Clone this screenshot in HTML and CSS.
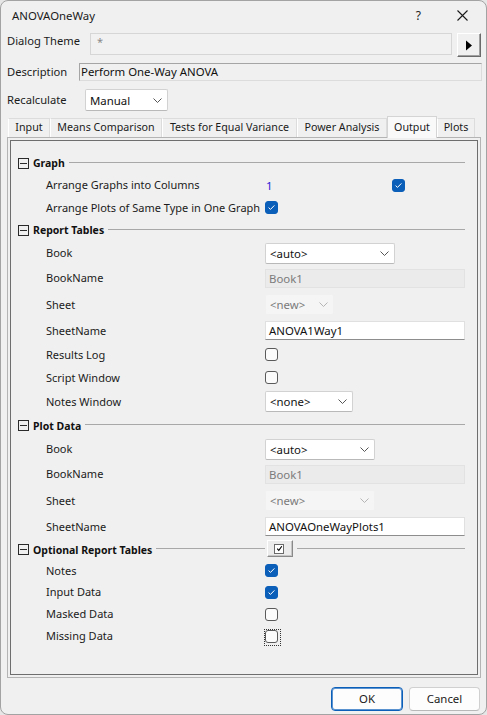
FILE: index.html
```html
<!DOCTYPE html>
<html>
<head>
<meta charset="utf-8">
<link rel="stylesheet" href="styles.css">
</head>
<body>
<div class="window">
  <div class="titlebar">
    <span class="title">ANOVAOneWay</span>
    <span class="help">?</span>
    <span class="close"><svg width="11" height="11" viewBox="0 0 11 11"><path d="M0.5 0.5L10.5 10.5M10.5 0.5L0.5 10.5" stroke="#1a1a1a" stroke-width="1.1" fill="none"/></svg></span>
  </div>

  <div class="top-row theme-row">
    <span class="top-label theme-label">Dialog Theme</span>
    <div class="theme-box">*</div>
    <div class="theme-btn"><svg width="8" height="11" viewBox="0 0 8 11"><path d="M1 0.5L7 5.5L1 10.5Z" fill="#000"/></svg></div>
  </div>

  <div class="top-row desc-row">
    <span class="top-label desc-label">Description</span>
    <div class="desc-box">Perform One-Way ANOVA</div>
  </div>

  <div class="top-row recalc-row">
    <span class="top-label recalc-label">Recalculate</span>
    <div class="select recalc-select"><span>Manual</span><svg class="chev" width="9" height="5" viewBox="0 0 9 5"><path d="M0.5 0.5L4.5 4.5L8.5 0.5" stroke="#555" fill="none"/></svg></div>
  </div>

  <div class="tabs">
    <div class="tab t-input">Input</div>
    <div class="tab t-means">Means Comparison</div>
    <div class="tab t-tests">Tests for Equal Variance</div>
    <div class="tab t-power">Power Analysis</div>
    <div class="tab t-output active">Output</div>
    <div class="tab t-plots">Plots</div>
  </div>

  <div class="panel">
    <div class="panel-inner">
      <div class="props">
        <div class="sec"><span class="minus"></span><span class="sec-title">Graph</span><span class="sec-line"></span></div>
        <div class="prop"><span class="lbl">Arrange Graphs into Columns</span><span class="num">1</span><span class="cb on cb-far"><svg width="11" height="11" viewBox="0 0 11 11"><path d="M2.6 5.6L4.5 7.4L8.4 3.4" stroke="#fff" stroke-width="1" fill="none"/></svg></span></div>
        <div class="prop"><span class="lbl auto">Arrange Plots of Same Type in One Graph</span><span class="cb on cb-near"><svg width="11" height="11" viewBox="0 0 11 11"><path d="M2.6 5.6L4.5 7.4L8.4 3.4" stroke="#fff" stroke-width="1" fill="none"/></svg></span></div>

        <div class="sec"><span class="minus"></span><span class="sec-title">Report Tables</span><span class="sec-line"></span></div>
        <div class="prop"><span class="lbl">Book</span><div class="select w130"><span>&lt;auto&gt;</span><svg class="chev" width="9" height="5" viewBox="0 0 9 5"><path d="M0.5 0.5L4.5 4.5L8.5 0.5" stroke="#555" fill="none"/></svg></div></div>
        <div class="prop"><span class="lbl">BookName</span><div class="input disabled">Book1</div></div>
        <div class="prop"><span class="lbl">Sheet</span><div class="select disabled w69"><span>&lt;new&gt;</span><svg class="chev" width="9" height="5" viewBox="0 0 9 5"><path d="M0.5 0.5L4.5 4.5L8.5 0.5" stroke="#b5b5b5" fill="none"/></svg></div></div>
        <div class="prop"><span class="lbl">SheetName</span><div class="input">ANOVA1Way1</div></div>
        <div class="prop"><span class="lbl">Results Log</span><span class="cb"></span></div>
        <div class="prop"><span class="lbl">Script Window</span><span class="cb"></span></div>
        <div class="prop"><span class="lbl">Notes Window</span><div class="select w88"><span>&lt;none&gt;</span><svg class="chev" width="9" height="5" viewBox="0 0 9 5"><path d="M0.5 0.5L4.5 4.5L8.5 0.5" stroke="#555" fill="none"/></svg></div></div>

        <div class="sec"><span class="minus"></span><span class="sec-title">Plot Data</span><span class="sec-line"></span></div>
        <div class="prop"><span class="lbl">Book</span><div class="select w110"><span>&lt;auto&gt;</span><svg class="chev" width="9" height="5" viewBox="0 0 9 5"><path d="M0.5 0.5L4.5 4.5L8.5 0.5" stroke="#555" fill="none"/></svg></div></div>
        <div class="prop"><span class="lbl">BookName</span><div class="input disabled">Book1</div></div>
        <div class="prop"><span class="lbl">Sheet</span><div class="select disabled w110"><span>&lt;new&gt;</span><svg class="chev" width="9" height="5" viewBox="0 0 9 5"><path d="M0.5 0.5L4.5 4.5L8.5 0.5" stroke="#b5b5b5" fill="none"/></svg></div></div>
        <div class="prop"><span class="lbl">SheetName</span><div class="input">ANOVAOneWayPlots1</div></div>

        <div class="sec sec-opt">
          <span class="sec-head"><span class="minus"></span><span class="sec-title">Optional Report Tables</span><span class="sec-line"></span></span>
          <span class="mini-btn"><span class="mini-cb"><svg width="7" height="7" viewBox="0 0 7 7"><path d="M1.2 3.6L2.8 5.3L5.8 1.2" stroke="#000" stroke-width="1.1" fill="none"/></svg></span></span>
          <span class="sec-line"></span>
        </div>
        <div class="prop"><span class="lbl">Notes</span><span class="cb on"><svg width="11" height="11" viewBox="0 0 11 11"><path d="M2.6 5.6L4.5 7.4L8.4 3.4" stroke="#fff" stroke-width="1" fill="none"/></svg></span></div>
        <div class="prop"><span class="lbl">Input Data</span><span class="cb on"><svg width="11" height="11" viewBox="0 0 11 11"><path d="M2.6 5.6L4.5 7.4L8.4 3.4" stroke="#fff" stroke-width="1" fill="none"/></svg></span></div>
        <div class="prop"><span class="lbl">Masked Data</span><span class="cb"></span></div>
        <div class="prop"><span class="lbl">Missing Data</span><span class="focus"><span class="cb"></span></span></div>
      </div>
    </div>
  </div>

  <div class="buttons">
    <div class="btn default">OK</div>
    <div class="btn">Cancel</div>
  </div>
</div>
</body>
</html>
```
FILE: styles.css
```css
html, body {
  margin: 0;
  padding: 0;
  background: #e6e6e6;
}
body {
  font-family: "Noto Sans", "Segoe UI", sans-serif;
  font-size: 11px;
  color: #1b1b1b;
}
.window {
  width: 487px;
  height: 715px;
  box-sizing: border-box;
  border: 1px solid #a3a3a3;
  border-radius: 8px;
  background: #f0f0f0;
  overflow: hidden;
}
.titlebar {
  height: 28px;
  display: flex;
  align-items: center;
  padding-left: 11px;
  padding-right: 18px;
}
.title {
  font-size: 11.4px;
  color: #1a1a1a;
}
.help {
  margin-left: auto;
  font-size: 12px;
  color: #222;
  margin-right: 36px;
}
.close {
  display: flex;
  width: 11px;
  height: 11px;
}
.top-row {
  display: flex;
  padding-left: 6px;
}
.top-label {
  line-height: 16px;
  font-size: 11.2px;
}
.theme-row {
  margin-top: 4px;
  height: 24px;
  align-items: flex-start;
}
.theme-label {
  width: 83px;
}
.theme-box {
  width: 362px;
  height: 22px;
  box-sizing: border-box;
  border: 1px solid #d6d6d6;
  background: #f1f1f1;
  color: #8a8a8a;
  font-size: 11px;
  line-height: 16px;
  padding-left: 6px;
}
.theme-btn {
  margin-left: 5px;
  width: 24px;
  height: 24px;
  box-sizing: border-box;
  border: 1px solid;
  border-color: #ffffff #6a6a6a #6a6a6a #ffffff;
  box-shadow: inset -1px -1px 0 #a0a0a0;
  background: #f0f0f0;
  display: flex;
  align-items: center;
  justify-content: center;
}
.desc-row {
  margin-top: 6px;
  height: 18px;
  align-items: center;
}
.desc-label {
  width: 72px;
}
.desc-box {
  width: 403px;
  height: 18px;
  box-sizing: border-box;
  border: 1px solid;
  border-color: #a5a5a5 #dcdcdc #dcdcdc #a5a5a5;
  background: #f0f0f0;
  font-size: 11.4px;
  line-height: 16px;
  padding-left: 1px;
  color: #111;
}
.recalc-row {
  margin-top: 8px;
  height: 22px;
  align-items: center;
}
.recalc-label {
  width: 78px;
}
.select {
  height: 21px;
  box-sizing: border-box;
  border: 1px solid #d2d2d2;
  border-bottom-color: #b9b9b9;
  border-radius: 2px;
  background: #ffffff;
  display: flex;
  align-items: center;
  justify-content: space-between;
  padding: 0 5px 0 4px;
  font-size: 11.4px;
  color: #111;
}
.recalc-select {
  width: 83px;
  height: 22px;
}
.chev {
  display: block;
}
.select.disabled {
  background: #f5f5f5;
  border-color: #f0f0f0;
  color: #7a7a7a;
}
.w130 { width: 130px; }
.w110 { width: 110px; }
.w88 { width: 88px; }
.w69 { width: 69px; }

.tabs {
  margin-top: 5px;
  height: 21px;
  display: flex;
  align-items: flex-end;
  padding-left: 7px;
}
.tab {
  height: 19px;
  box-sizing: border-box;
  border: 1px solid #dcdcdc;
  border-bottom: none;
  border-left-color: #ffffff;
  background: #f0f0f0;
  font-size: 10.7px;
  line-height: 17px;
  text-align: center;
  color: #1b1b1b;
}
.tab.active {
  height: 22px;
  margin-bottom: -1px;
  background: #f9f9f9;
  border-color: #d4d4d4;
  line-height: 20px;
  position: relative;
  z-index: 2;
}
.t-input { width: 42px; }
.t-means { width: 112px; }
.t-tests { width: 135px; }
.t-power { width: 90px; }
.t-output { width: 50px; }
.t-plots { width: 38px; }

.panel {
  margin-left: 6px;
  width: 474px;
  height: 541px;
  box-sizing: border-box;
  border: 1px solid #b4b4b4;
  padding: 2px;
  position: relative;
  z-index: 1;
}
.panel-inner {
  height: 100%;
  box-sizing: border-box;
  border: 1px solid #6e6e6e;
  padding: 11px 12px 0 7px;
}
.props {
  display: grid;
  grid-template-rows: 22px 22px 23px 22px 24px 26px 27px 25px 23px 23px 25px 23px 24px 26px 27px 25px 21px 21px 22px 22px 22px;
}
.sec {
  display: flex;
  align-items: center;
}
.minus {
  width: 11px;
  height: 11px;
  box-sizing: border-box;
  border: 1px solid #2a2a2a;
  position: relative;
  flex: none;
}
.minus::after {
  content: "";
  position: absolute;
  left: 1px;
  right: 1px;
  top: 4px;
  height: 1px;
  background: #2a2a2a;
}
.sec-title {
  margin-left: 4px;
  font-weight: bold;
  font-size: 10.5px;
  line-height: 16px;
  color: #111;
}
.sec-line {
  flex: 1;
  height: 1px;
  background: #a8a8a8;
  margin-left: 4px;
  margin-top: -2px;
}
.sec-opt .sec-head {
  width: 247px;
  display: flex;
  align-items: center;
  flex: none;
}
.mini-btn {
  margin-left: 2px;
  width: 26px;
  height: 17px;
  box-sizing: border-box;
  border: 1px solid;
  border-color: #ffffff #8a8a8a #8a8a8a #ffffff;
  box-shadow: inset -1px -1px 0 #c6c6c6;
  background: #ececec;
  display: flex;
  align-items: center;
  justify-content: center;
  flex: none;
  margin-top: -2px;
}
.mini-cb {
  width: 10px;
  height: 10px;
  box-sizing: border-box;
  border: 1px solid #6b6b6b;
  background: #fff;
  display: flex;
  align-items: center;
  justify-content: center;
  margin-left: -2px;
}
.prop {
  display: flex;
  align-items: center;
  padding-left: 28px;
}
.lbl {
  width: 219px;
  flex: none;
  line-height: 16px;
  color: #1b1b1b;
}
.lbl.auto {
  width: auto;
  margin-right: 5px;
}
.num {
  color: #2e22d6;
  font-size: 11.4px;
  margin-left: 1px;
}
.cb {
  width: 13px;
  height: 13px;
  box-sizing: border-box;
  border: 1px solid #5a5a5a;
  border-radius: 3px;
  background: #fbfbfb;
  display: flex;
  align-items: center;
  justify-content: center;
  flex: none;
}
.cb.on {
  background: #0c5fb8;
  border-color: #0c5fb8;
}
.cb-far {
  margin-left: 119px;
}
.focus {
  display: flex;
  border: 1px dotted #333;
  padding: 0 2px 2px 0;
  margin-left: -1px;
  margin-top: 2px;
}
.input {
  width: 200px;
  height: 19px;
  box-sizing: border-box;
  border: 1px solid #e0e0e0;
  border-bottom-color: #8d8d8d;
  background: #ffffff;
  font-size: 11.4px;
  line-height: 17px;
  padding-left: 3px;
  color: #111;
}
.input.disabled {
  background: #ebebeb;
  border-color: #e2e2e2;
  color: #7b7b7b;
}
.buttons {
  margin-top: 9px;
  display: flex;
  justify-content: flex-end;
  padding-right: 6px;
  gap: 6px;
}
.btn {
  width: 71px;
  height: 24px;
  box-sizing: border-box;
  border: 1px solid #d0d0d0;
  border-bottom-color: #b8b8b8;
  border-radius: 4px;
  background: #fdfdfd;
  font-size: 11.4px;
  line-height: 22px;
  text-align: center;
  color: #1a1a1a;
}
.btn.default {
  width: 72px;
  border-color: #0c5fb8;
  box-shadow: inset 0 0 0 1px #5a93d0;
}
```
